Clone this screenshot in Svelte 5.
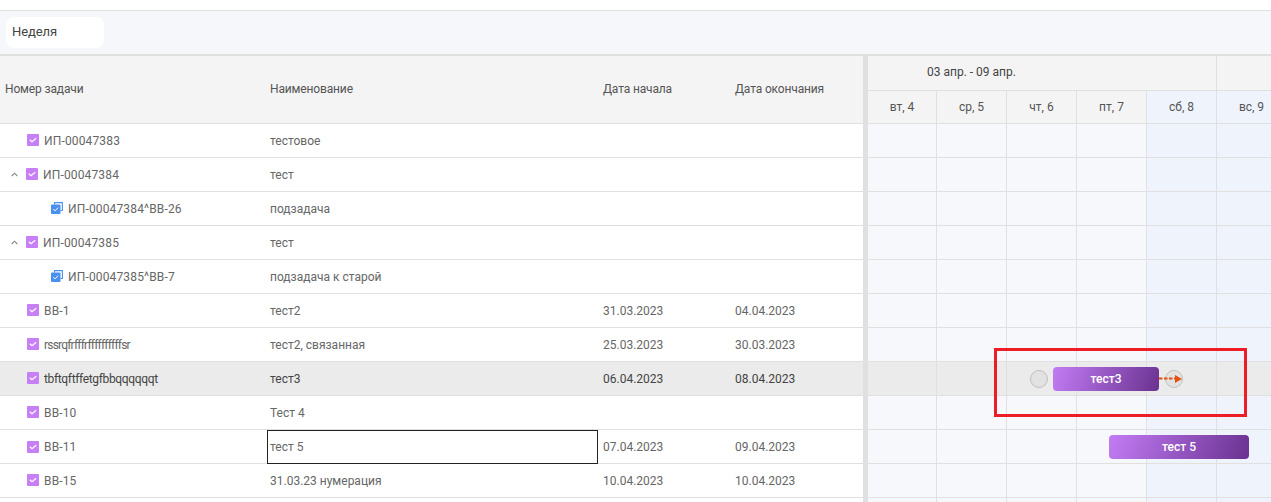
<script>
  const rows = [
    { id: "ИП-00047383", name: "тестовое", start: "", end: "", kind: "task" },
    { id: "ИП-00047384", name: "тест", start: "", end: "", kind: "parent" },
    { id: "ИП-00047384^ВВ-26", name: "подзадача", start: "", end: "", kind: "sub" },
    { id: "ИП-00047385", name: "тест", start: "", end: "", kind: "parent" },
    { id: "ИП-00047385^ВВ-7", name: "подзадача к старой", start: "", end: "", kind: "sub" },
    { id: "ВВ-1", name: "тест2", start: "31.03.2023", end: "04.04.2023", kind: "task" },
    { id: "rssrqfrfffrffffffffffsr", name: "тест2, связанная", start: "25.03.2023", end: "30.03.2023", kind: "task", tight: "f" },
    { id: "tbftqftffetgfbbqqqqqqt", name: "тест3", start: "06.04.2023", end: "08.04.2023", kind: "task", active: true, tight: "t" },
    { id: "ВВ-10", name: "Тест 4", start: "", end: "", kind: "task" },
    { id: "ВВ-11", name: "тест 5", start: "07.04.2023", end: "09.04.2023", kind: "task", editing: true },
    { id: "ВВ-15", name: "31.03.23 нумерация", start: "10.04.2023", end: "10.04.2023", kind: "task" },
    { id: "", name: "", start: "", end: "", kind: "blank" }
  ];
  const days = [
    { label: "вт, 4", w: 69 },
    { label: "ср, 5", w: 70 },
    { label: "чт, 6", w: 70 },
    { label: "пт, 7", w: 70 },
    { label: "сб, 8", w: 70, off: true },
    { label: "вс, 9", w: 70, off: true }
  ];
</script>

<div class="page">
  <div class="top"></div>
  <div class="toolbar">
    <div class="period">Неделя</div>
  </div>
  <div class="main">
    <div class="table">
      <div class="thead">
        <div class="c1">Номер задачи</div>
        <div class="c2">Наименование</div>
        <div class="c3">Дата начала</div>
        <div class="c4">Дата окончания</div>
      </div>
      {#each rows as row}
        <div class="row" class:active={row.active}>
          <div class="c1 idcell {row.kind}">
            {#if row.kind === "parent"}
              <svg class="chev" width="7" height="5" viewBox="0 0 7 5"><path d="M.7 4 3.5 1.2 6.3 4" fill="none" stroke="#888" stroke-width="1.1" /></svg>
            {/if}
            {#if row.kind === "sub"}
              <svg class="ico" width="12" height="12" viewBox="0 0 12 12">
                <path d="M3.5 2.5V.6h7.9v7.9H9.5" fill="none" stroke="#4a90ee" stroke-width="1.1" />
                <rect y="2.5" width="9.5" height="9.5" rx="1" fill="#4a90ee" />
                <path d="M2.3 7.2 4 8.9 7.2 5.6" fill="none" stroke="#fff" stroke-width="1" />
              </svg>
            {:else if row.kind !== "blank"}
              <svg class="ico" width="12" height="12" viewBox="0 0 12 12">
                <rect width="12" height="12" rx="1" fill="#c77ff5" />
                <path d="M2.8 5.8 5 7.8 9.2 4.2" fill="none" stroke="#fff" stroke-width="1.2" />
              </svg>
            {/if}
            <span class:tight-f={row.tight === "f"} class:tight-t={row.tight === "t"}>{row.id}</span>
          </div>
          <div class="c2" class:editing={row.editing}>{row.name}</div>
          <div class="c3">{row.start}</div>
          <div class="c4">{row.end}</div>
        </div>
      {/each}
    </div>
    <div class="splitter"></div>
    <div class="gantt">
      <div class="weeks">
        <div class="week">03 апр. - 09 апр.</div>
        <div class="week next"></div>
      </div>
      <div class="days">
        {#each days as day}
          <div class="day" class:off={day.off} style="width: {day.w}px">{day.label}</div>
        {/each}
      </div>
      {#each rows as row}
        <div class="grow" class:active={row.active}>
          {#each days as day}
            <div class="gcell" class:off={day.off} style="width: {day.w}px"></div>
          {/each}
        </div>
      {/each}

      <div class="knob left"></div>
      <div class="bar b3">тест3</div>
      <div class="knob right"></div>
      <svg class="arrow" width="24" height="12" viewBox="0 0 24 12">
        <path d="M0 5.5H17" stroke="#e2520f" stroke-width="2" stroke-dasharray="3.5 1.5" fill="none" />
        <path d="M16 2 23 6 16 10Z" fill="#e2520f" />
      </svg>
      <div class="bar b5">тест 5</div>
      <div class="mark"></div>
    </div>
  </div>
</div>

<style>
  :global(body) {
    margin: 0;
    overflow: hidden;
  }
  .page {
    width: 1271px;
    height: 502px;
    overflow: hidden;
    background: #fff;
    font-family: Roboto, "Noto Sans", sans-serif;
    font-size: 12px;
    color: #666;
  }
  .top {
    height: 10px;
    border-bottom: 1px solid #dfdfe4;
  }
  .toolbar {
    height: 44px;
    box-sizing: border-box;
    padding: 6px 0 0 6px;
    background: #f6f7fb;
    border-bottom: 1px solid #e0e0e0;
  }
  .period {
    width: 98px;
    height: 31px;
    box-sizing: border-box;
    padding-left: 6px;
    line-height: 30px;
    font-size: 13px;
    letter-spacing: -0.1px;
    color: #444;
    background: #fff;
    border-radius: 8px;
  }
  .main {
    display: flex;
    border-top: 1px solid #e0e0e0;
  }
  .table {
    width: 863px;
    flex: none;
  }
  .thead {
    display: grid;
    grid-template-columns: 267px 331px 132px 133px;
    height: 68px;
    padding-bottom: 2px;
    align-items: center;
    background: #f4f4f4;
    border-bottom: 1px solid #e0e0e0;
    box-sizing: border-box;
    color: #555;
    letter-spacing: -0.15px;
  }
  .row {
    display: grid;
    grid-template-columns: 267px 331px 132px 133px;
    height: 34px;
    align-items: center;
    box-sizing: border-box;
    border-bottom: 1px solid #e0e0e0;
  }
  .row.active {
    background: #ebebeb;
    color: #444;
  }
  .c1 {
    padding-left: 5px;
  }
  .c2 {
    padding-left: 3px;
  }
  .c3,
  .c4 {
    padding-left: 5px;
  }
  .idcell {
    display: flex;
    align-items: center;
    gap: 5px;
    height: 100%;
    letter-spacing: 0.15px;
  }
  .idcell.task {
    padding-left: 27px;
  }
  .idcell.parent {
    padding-left: 11px;
  }
  .idcell.sub {
    padding-left: 51px;
  }
  .tight-f {
    letter-spacing: -0.8px;
  }
  .tight-t {
    letter-spacing: -0.35px;
  }
  .chev {
    margin-right: 3px;
  }
  .ico {
    margin-top: -1px;
    flex: none;
  }
  .editing {
    align-self: stretch;
    display: flex;
    align-items: center;
    box-sizing: border-box;
    padding-left: 2px;
    height: 34px;
    border: 1px solid #222;
  }
  .splitter {
    width: 5px;
    flex: none;
    background: #e0e0e0;
  }
  .gantt {
    position: relative;
    flex: 1;
    min-width: 0;
    overflow: hidden;
    background: #f7f8fc;
  }
  .weeks {
    display: flex;
    height: 35px;
    background: #f4f4f4;
    border-bottom: 1px solid #e0e0e0;
    box-sizing: border-box;
  }
  .week {
    width: 349px;
    flex: none;
    box-sizing: border-box;
    padding-left: 59px;
    line-height: 32px;
    color: #444;
    border-right: 1px solid #e0e0e0;
  }
  .days {
    display: flex;
    height: 33px;
  }
  .day {
    flex: none;
    box-sizing: border-box;
    text-align: center;
    line-height: 32px;
    background: #f4f4f4;
    border-right: 1px solid #e0e0e0;
    border-bottom: 1px solid #e0e0e0;
    color: #555;
  }
  .day.off {
    background: #eff3fc;
  }
  .grow {
    display: flex;
    height: 34px;
  }
  .gcell {
    flex: none;
    box-sizing: border-box;
    border-right: 1px solid #e0e0e0;
    border-bottom: 1px solid #e0e0e0;
  }
  .gcell.off {
    background: #eff3fc;
  }
  .grow.active .gcell {
    background: #ebebeb;
  }
  .bar {
    position: absolute;
    height: 24px;
    line-height: 24px;
    text-align: center;
    border-radius: 4px;
    color: #fff;
    font-weight: 500;
    background: linear-gradient(110deg, #c27cf4 0%, #6a3290 100%);
  }
  .b3 {
    left: 185px;
    top: 311px;
    width: 106px;
  }
  .b5 {
    left: 241px;
    top: 379px;
    width: 140px;
  }
  .knob {
    position: absolute;
    top: 314px;
    width: 18px;
    height: 18px;
    box-sizing: border-box;
    border-radius: 50%;
    background: #e2e2e2;
    border: 1.5px solid #c0c0c0;
  }
  .knob.left {
    left: 161.5px;
  }
  .knob.right {
    left: 296.5px;
  }
  .arrow {
    position: absolute;
    left: 291px;
    top: 317px;
  }
  .mark {
    position: absolute;
    left: 126px;
    top: 292px;
    width: 253px;
    height: 69px;
    box-sizing: border-box;
    border: 3px solid #ee1c25;
  }
</style>
